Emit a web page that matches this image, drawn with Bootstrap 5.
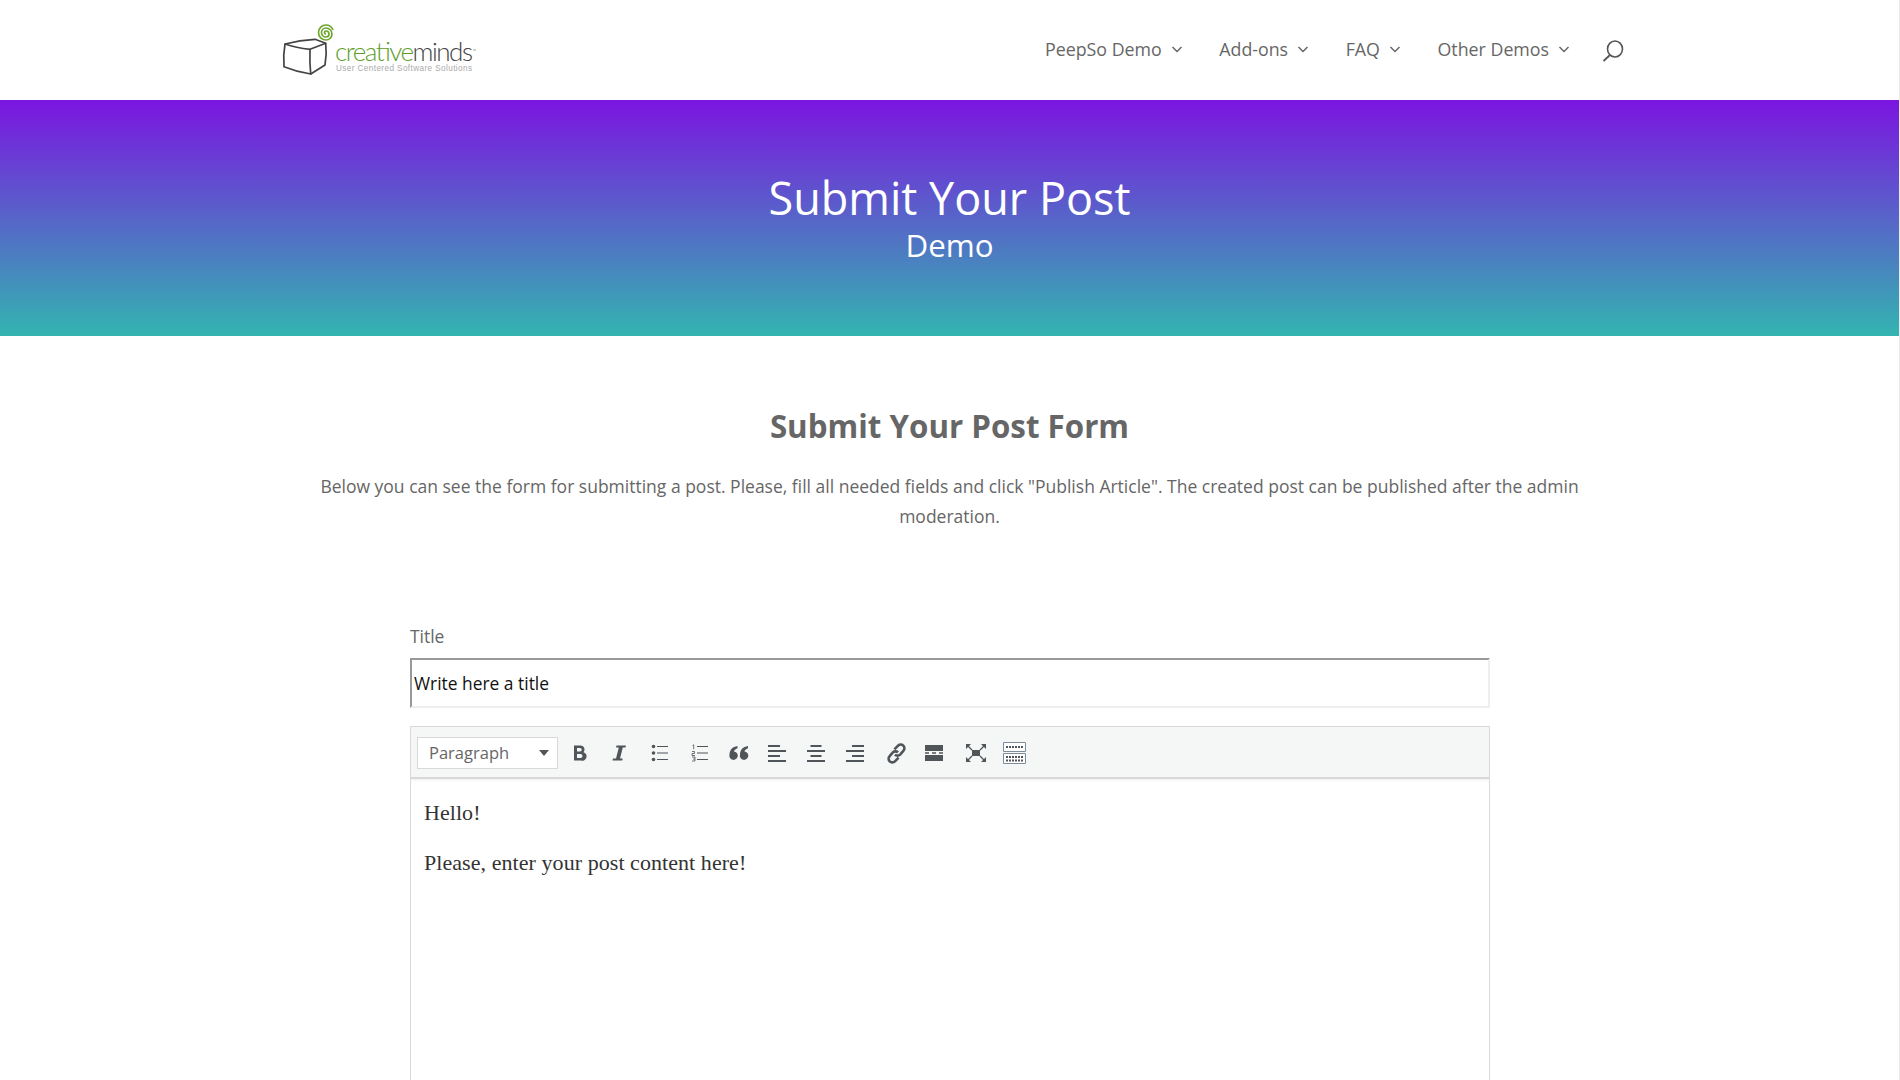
<!DOCTYPE html>
<html lang="en">
<head>
  <meta charset="UTF-8">
  <meta name="viewport" content="width=device-width, initial-scale=1">
  <title>Submit Your Post</title>
  <link href="https://cdn.jsdelivr.net/npm/bootstrap@5.3.3/dist/css/bootstrap.min.css" rel="stylesheet">
  <style>
    body { font-family: "Open Sans", sans-serif; color: #666; background: #fff; font-size: 17.5px; }
    .page-clip { height: 100vh; overflow: hidden; border-right: 1px solid #e9e9e9; }
    .site-header { height: 100px; }
    .header-inner { width: 1343px; margin-left: 282px; }
    .logo-box { width: 196px; height: 60px; }
    .main-menu { gap: 35.6px; }
    .main-menu a { color: #666; text-decoration: none; font-size: 17.8px; font-weight: 500; gap: 8px; margin-top: -1px; }
    .search-icon { margin-left: -5.6px; margin-top: 2px; }
    .hero-band { height: 236px; background: linear-gradient(180deg, #7b15e0 0%, #33b4b1 100%); color: #fff; padding-top: 72px; }
    .hero-band h1 { font-size: 45px; font-weight: 400; line-height: 51px; margin: 0; }
    .hero-band h2 { font-size: 31.3px; font-weight: 400; line-height: 44px; margin: 0; }
    .intro-block { width: 1280px; margin: 0 auto; padding-top: 70px; }
    .intro-block h3 { font-size: 31.3px; font-weight: 700; color: #666; line-height: 40px; margin-bottom: 25px; }
    .intro-block p { line-height: 30px; margin: 0; }
    .post-form { width: 1080px; margin: 90px 0 0 410px; }
    .field-label { line-height: 30px; margin-bottom: 7px; display: block; font-size: 17.4px; }
    .title-input { width: 100%; height: 50px; border: 2px solid #eee; border-top-color: #999; border-left-color: #999; padding: 0 2px; color: #111; font-size: 17.4px; outline: 0; }
    .title-input::placeholder { color: #111; opacity: 1; }
    .editor-bar { margin-top: 18px; height: 53px; background: #f5f6f6; border: 1px solid #d9d9d9; border-bottom: 2px solid #d9d9d9; padding: 10px 6px 8px; }
    .format-select { width: 141px; height: 32px; background: #fff; border: 1px solid #d9d9d9; padding: 0 8px 0 11px; font-size: 16.5px; color: #666; }
    .format-caret { width: 0; height: 0; border-left: 5px solid transparent; border-right: 5px solid transparent; border-top: 6px solid #50555a; }
    .tool-btn { width: 39.4px; height: 32px; color: #50555a; }
    .editor-body { border: 1px solid #d9d9d9; border-top: 0; height: 500px; padding: 19px 13px; font-family: "Liberation Serif", serif; font-size: 22px; letter-spacing: .06px; color: #333; box-shadow: inset 0 3px 3px -2px #eee; }
    .editor-body p { margin: 0 0 20px; line-height: 30px; }
  </style>
</head>
<body>
<div class="page-clip">

  <header class="site-header d-flex align-items-center bg-white">
    <div class="header-inner d-flex align-items-center justify-content-between">
      <svg class="logo-box" viewBox="0 0 196 60" xmlns="http://www.w3.org/2000/svg">
        <g fill="none" stroke="#444" stroke-width="1.7" stroke-linejoin="round" stroke-linecap="round">
          <path d="M3 24Q18 20 33 19.300L43.700 23.300L28 29.300Q14 28 3 24Z"/>
          <path d="M3 24Q1 35 2 46.700Q15 52 28.700 54L43 45Q45 34 43.700 23.300"/>
          <path d="M28 29.300Q27.500 42 28.700 54"/>
        </g>
        <path d="M44 14a1.500 1.500 0 0 1 0-3a3 3 0 0 1 0 6a4.500 4.500 0 0 1 0-9a6 6 0 0 1 0 12a7.500 7.500 0 0 1 0-15a7.500 7.500 0 0 1 7 5" fill="none" stroke="#6fa82f" stroke-width="1.700"/>
        <text x="53" y="41" font-family="Lato, sans-serif" font-weight="300" font-size="26" textLength="138" fill="#5e9e2a">creative<tspan fill="#444">minds</tspan></text>
        <path d="M191 30h3" stroke="#888" stroke-width=".8"/>
        <text x="54" y="51" font-family="Liberation Sans, sans-serif" font-size="8.200" textLength="136" fill="#aaa">User Centered Software Solutions</text>
      </svg>
      <nav class="main-menu d-flex align-items-center">
        <a href="#" class="d-flex align-items-center">PeepSo Demo <svg width="14" height="9" viewBox="0 0 14 9"><path d="M2.500 2l4.500 4.500L11.500 2" fill="none" stroke="#666" stroke-width="1.500"/></svg></a>
        <a href="#" class="d-flex align-items-center">Add-ons <svg width="14" height="9" viewBox="0 0 14 9"><path d="M2.500 2l4.500 4.500L11.500 2" fill="none" stroke="#666" stroke-width="1.500"/></svg></a>
        <a href="#" class="d-flex align-items-center">FAQ <svg width="14" height="9" viewBox="0 0 14 9"><path d="M2.500 2l4.500 4.500L11.500 2" fill="none" stroke="#666" stroke-width="1.500"/></svg></a>
        <a href="#" class="d-flex align-items-center">Other Demos <svg width="14" height="9" viewBox="0 0 14 9"><path d="M2.500 2l4.500 4.500L11.500 2" fill="none" stroke="#666" stroke-width="1.500"/></svg></a>
        <svg class="search-icon" width="24" height="24" viewBox="0 0 24 24"><ellipse cx="14" cy="10" rx="7.500" ry="8" fill="none" stroke="#555" stroke-width="1.600"/><path d="M9 16L2.500 22" stroke="#555" stroke-width="1.800"/></svg>
      </nav>
    </div>
  </header>

  <section class="hero-band text-center">
    <h1>Submit Your Post</h1>
    <h2>Demo</h2>
  </section>

  <section class="intro-block text-center">
    <h3>Submit Your Post Form</h3>
    <p>Below you can see the form for submitting a post. Please, fill all needed fields and click "Publish Article". The created post can be published after the admin moderation.</p>
  </section>

  <form class="post-form">
    <label class="field-label" for="postTitle">Title</label>
    <input id="postTitle" class="title-input" type="text" placeholder="Write here a title">

    <div class="editor-bar d-flex align-items-center">
      <div class="format-select d-flex align-items-center justify-content-between me-1"><span>Paragraph</span><i class="format-caret"></i></div>
      <span class="tool-btn d-flex align-items-center justify-content-center"><svg class="me-1" width="18" height="18" viewBox="0 0 18 18"><path d="M3 1.500h6.500a4 4 0 0 1 3 6.700A4.300 4.300 0 0 1 10 16.500H3Zm3 2.500v3.500h3a1.750 1.750 0 0 0 0-3.500Zm0 6v4h3.500a2 2 0 0 0 0-4Z" fill="currentColor" fill-rule="evenodd"/></svg></span>
      <span class="tool-btn d-flex align-items-center justify-content-center"><svg class="me-1" width="18" height="18" viewBox="0 0 18 18"><path d="M6.500 1.500h9.500l-.5 2h-2.700L10 14.500h2.700l-.5 2H2.500l.5-2h3L8.800 3.500H6Z" fill="currentColor"/></svg></span>
      <span class="tool-btn d-flex align-items-center justify-content-center"><svg width="18" height="18" viewBox="0 0 18 18"><circle cx="2.500" cy="2.500" r="1.800" fill="currentColor"/><circle cx="2.500" cy="9" r="1.800" fill="currentColor"/><circle cx="2.500" cy="15.500" r="1.800" fill="currentColor"/><path d="M6 2.500h11M6 9h11M6 15.500h11" stroke="currentColor" stroke-width="1.200"/></svg></span>
      <span class="tool-btn d-flex align-items-center justify-content-center"><svg width="18" height="18" viewBox="0 0 18 18"><path d="M6 2.500h11M6 9h11M6 15.500h11" stroke="currentColor" stroke-width="1.200"/><path d="M1.500 1.500l1.200-.7v4.500M1 7.500h2.500v2H1v2h3M1 13h3v4H1M2 15h2" fill="none" stroke="currentColor" stroke-width=".8"/></svg></span>
      <span class="tool-btn d-flex align-items-center justify-content-center"><svg width="20" height="18" viewBox="0 0 20 18"><path d="M8.500 2v2.200C6.300 5 5.300 6 5 7.500a4.200 4.200 0 1 1-4.500 3.200C.5 6 3.500 2.700 8.500 2ZM19 2v2.200c-2.200.8-3.200 1.800-3.500 3.300a4.200 4.200 0 1 1-4.500 3.200C11 6 14 2.700 19 2Z" fill="currentColor"/></svg></span>
      <span class="tool-btn d-flex align-items-center justify-content-center"><svg class="me-1" width="18" height="17" viewBox="0 0 18 17"><path d="M0 1h12M0 6h18M0 11h12M0 16h18" stroke="currentColor" stroke-width="1.800"/></svg></span>
      <span class="tool-btn d-flex align-items-center justify-content-center"><svg class="me-1" width="18" height="17" viewBox="0 0 18 17"><path d="M3.500 1h11M0 6h18M3.500 11h11M0 16h18" stroke="currentColor" stroke-width="1.800"/></svg></span>
      <span class="tool-btn d-flex align-items-center justify-content-center"><svg class="me-1" width="18" height="17" viewBox="0 0 18 17"><path d="M6 1h12M0 6h18M6 11h12M0 16h18" stroke="currentColor" stroke-width="1.800"/></svg></span>
      <span class="tool-btn d-flex align-items-center justify-content-center"><svg width="23" height="23" viewBox="0 0 22 22"><g fill="none" stroke="currentColor" stroke-width="2.500"><path d="M9 7l3.500-3.500a3.500 3.500 0 0 1 5 5L14.500 12a3.500 3.500 0 0 1-5 0"/><path d="M13 15l-3.500 3.500a3.500 3.500 0 0 1-5-5L7.500 10a3.500 3.500 0 0 1 5 0"/></g></svg></span>
      <span class="tool-btn d-flex align-items-center justify-content-center"><svg class="me-1" width="18" height="18" viewBox="0 0 18 18"><path d="M0 1h18v6H0ZM0 11h18v6H0ZM0 8.300h4v1.400H0ZM7 8.300h4v1.400H7ZM14 8.300h4v1.400h-4Z" fill="currentColor"/></svg></span>
      <span class="tool-btn d-flex align-items-center justify-content-center"><svg width="20" height="18" viewBox="0 0 20 18"><path d="M6 6h8v6H6Z" fill="currentColor"/><path d="M2 2l4 4M18 2l-4 4M2 16l4-4M18 16l-4-4" stroke="currentColor" stroke-width="1.300"/><path d="M0 0h5L0 5ZM20 0h-5l5 5ZM0 18h5l-5-5ZM20 18h-5l5-5Z" fill="currentColor"/></svg></span>
      <span class="tool-btn d-flex align-items-center justify-content-center"><svg width="23" height="22" viewBox="0 0 23 22"><path d="M.500.500h22v9H.500ZM.500 11.500h22v10H.500Z" fill="#fff" stroke="#7c8d9c"/><g fill="none" stroke="#50555a" stroke-width="2" stroke-dasharray="2 1"><path d="M3 5h17M3 15h17M3 18.500h17"/></g></svg></span>
    </div>
    <div class="editor-body">
      <p>Hello!</p>
      <p>Please, enter your post content here!</p>
    </div>
  </form>

</div>
<script src="https://cdn.jsdelivr.net/npm/bootstrap@5.3.3/dist/js/bootstrap.bundle.min.js"></script>
</body>
</html>
